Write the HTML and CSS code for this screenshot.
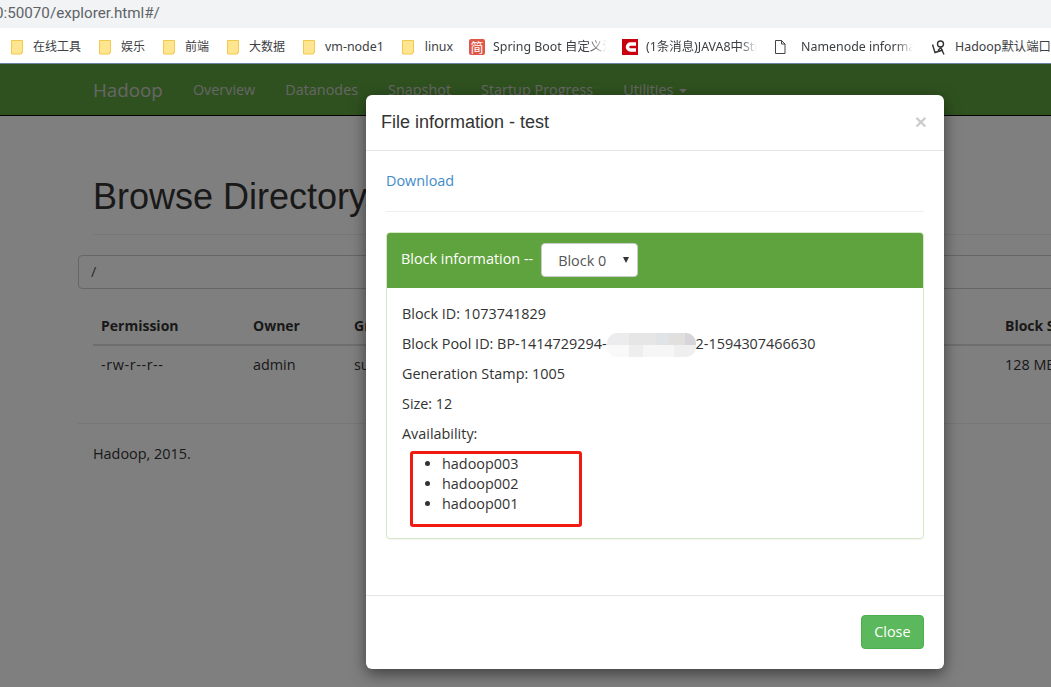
FILE: index.html
```html
<!DOCTYPE html>
<html lang="en">
<head>
	<meta charset="utf-8">
	<title>Browsing HDFS</title>
	<link rel="stylesheet" href="styles.css">
</head>
<body>
<div class="urlbar"><span class="url">0:50070/explorer.html#/</span></div>
<div class="bookmarks">
	<a class="mark"><svg class="ico" viewBox="0 0 16 16"><path class="folder" d="M3.500 1.500h11v12h-1v1.500h-10z"/></svg><span>在线工具</span></a>
	<a class="mark"><svg class="ico" viewBox="0 0 16 16"><path class="folder" d="M3.500 1.500h11v12h-1v1.500h-10z"/></svg><span>娱乐</span></a>
	<a class="mark"><svg class="ico" viewBox="0 0 16 16"><path class="folder" d="M3.500 1.500h11v12h-1v1.500h-10z"/></svg><span>前端</span></a>
	<a class="mark"><svg class="ico" viewBox="0 0 16 16"><path class="folder" d="M3.500 1.500h11v12h-1v1.500h-10z"/></svg><span>大数据</span></a>
	<a class="mark"><svg class="ico" viewBox="0 0 16 16"><path class="folder" d="M3.500 1.500h11v12h-1v1.500h-10z"/></svg><span class="lat">vm-node1</span></a>
	<a class="mark"><svg class="ico" viewBox="0 0 16 16"><path class="folder" d="M3.500 1.500h11v12h-1v1.500h-10z"/></svg><span class="lat w-linux">linux</span></a>
	<a class="mark"><span class="ico jian">简</span><span class="lat fade w-spring">Spring Boot 自定义注解</span></a>
	<a class="mark"><svg class="ico csdn" viewBox="0 0 16 16"><rect width="16" height="16" fill="#c9000f"/><path d="M14 5H8.500a3 3 0 0 0 0 6H14" fill="none" stroke="#fff" stroke-width="3.500"/></svg><span class="lat fade w-java">(1条消息)JAVA8中Stream</span></a>
	<a class="mark"><svg class="ico doc" viewBox="0 0 16 16"><path class="page" d="M3.500 1.500h6l3.500 3.500v9.500h-9.500z M9.500 1.500v3.500h3.500"/></svg><span class="lat fade w-name">Namenode information</span></a>
	<a class="mark"><svg class="ico ele" viewBox="0 0 16 16"><g class="elephant"><circle cx="9.500" cy="5" r="3"/><path d="M1.500 5.500l2.500 8 8-2.500M9.500 8l3.500 7.500M10 8.500l-3 3"/></g></svg><span class="lat">Hadoop默认端口号</span></a>
</div>

<div class="viewport">
	<nav class="navbar">
		<div class="nav-inner">
			<a class="brand">Hadoop</a>
			<a class="nav-link">Overview</a>
			<a class="nav-link">Datanodes</a>
			<a class="nav-link">Snapshot</a>
			<a class="nav-link">Startup Progress</a>
			<a class="nav-link">Utilities <i class="caret"></i></a>
		</div>
	</nav>

	<div class="container">
		<div class="page-header"><h1>Browse Directory</h1></div>
		<div class="path">/</div>
		<table class="files">
			<thead>
				<tr><th class="c1">Permission</th><th class="c2">Owner</th><th class="c3">Group</th><th class="c4"></th><th>Block Size</th></tr>
			</thead>
			<tbody>
				<tr><td class="perm">-rw-r--r--</td><td>admin</td><td>supergroup</td><td></td><td>128 MB</td></tr>
			</tbody>
		</table>
		<hr class="foot-rule">
		<p class="foot">Hadoop, 2015.</p>
	</div>

	<div class="backdrop"></div>

	<div class="modal">
		<div class="modal-header">
			<h4>File information - test</h4>
			<span class="close">&times;</span>
		</div>
		<div class="modal-body">
			<a class="download">Download</a>
			<hr>
			<div class="panel">
				<div class="panel-heading">
					<span class="panel-title">Block information --</span>
					<span class="select">Block 0<i class="arrow"></i></span>
				</div>
				<div class="panel-body">
					<p>Block ID: 1073741829</p>
					<p>Block Pool ID: BP-1414729294-<span class="smudge"></span>2-1594307466630</p>
					<p>Generation Stamp: 1005</p>
					<p>Size: 12</p>
					<p>Availability:</p>
					<ul>
						<li>hadoop003</li>
						<li>hadoop002</li>
						<li>hadoop001</li>
					</ul>
					<div class="redbox"></div>
				</div>
			</div>
		</div>
		<div class="modal-footer"><button type="button">Close</button></div>
	</div>
</div>
</body>
</html>
```

FILE: styles.css
```css
html, body{
	margin: 0;
	height: 687px;
	overflow: hidden;
	background: #fff;
}
body{
	font: 14.400px/20px "Open Sans", "Noto Sans CJK SC", sans-serif;
	color: #333;
}
.urlbar{
	height: 28px;
	background: #f1f3f4;
	overflow: hidden;
}
.url{
	display: block;
	margin-left: -5px;
	font: 15.200px/27px Roboto, sans-serif;
	color: #5f6368;
}
.bookmarks{
	height: 35px;
	box-sizing: content-box;
	padding-left: 8px;
	display: flex;
	align-items: center;
	white-space: nowrap;
	overflow: hidden;
	font: 12px/18px "Noto Sans", "Noto Sans CJK SC", sans-serif;
	color: #3c4043;
	border-bottom: 1px solid #6c83a8;
}
.mark{
	display: flex;
	align-items: center;
	margin-right: 15px;
	padding-top: 2px;
}
.lat{
	font-size: 12.400px;
}
.w-linux{ margin-left: 1px; }
.ico{
	width: 16px;
	height: 16px;
	margin-right: 9px;
	flex: none;
}
.folder{
	fill: #fde68f;
	stroke: #f2c94c;
}
.page{
	fill: #fff;
	stroke: #444;
}
.elephant{
	fill: none;
	stroke: #333;
	stroke-width: 1.400;
}
.jian{
	margin-left: 1px;
	margin-right: 8px;
	background: #e0574a;
	color: #fff;
	border-radius: 2px;
	font-size: 13px;
	line-height: 16px;
	text-align: center;
}
.csdn{ margin-right: 8px; }
.doc{ margin-right: 13px; }
.ele{ margin-left: 3px; margin-right: 8px; }
.fade{
	overflow: hidden;
	-webkit-mask-image: linear-gradient(to right, #000 85%, transparent);
	mask-image: linear-gradient(to right, #000 85%, transparent);
}
.w-spring{ width: 114px; }
.w-java{ width: 111px; }
.w-name{ width: 112px; }

.viewport{
	position: relative;
	height: 623px;
	overflow: hidden;
	background: #fff;
}
.navbar{
	height: 51px;
	background: #5fa33e;
	border-bottom: 1px solid #000;
	box-sizing: content-box;
}
.nav-inner{
	width: 1170px;
	margin-left: 78px;
	padding-left: 15px;
	display: flex;
	height: 51px;
	align-items: center;
	box-sizing: border-box;
	font-size: 14.400px;
}
.brand{
	font-size: 18.800px;
	color: #ccc;
	margin-right: 30px;
}
.nav-link{
	color: #ccc;
	margin-right: 30px;
}
.caret{
	display: inline-block;
	border-top: 4px solid #ccc;
	border-left: 4px solid transparent;
	border-right: 4px solid transparent;
	vertical-align: middle;
	margin-left: 2px;
}
.container{
	width: 1170px;
	margin-left: 78px;
	padding: 0 15px;
	box-sizing: border-box;
	height: 571px;
}
.page-header{
	width: 1140px;
	padding: 61px 0 17px;
	border-bottom: 1px solid #eee;
}
h1{
	margin: 0;
	font: 36px/40px "Liberation Sans", Arial, sans-serif;
	color: #333;
}
.path{
	margin: 20px 0 0 -15px;
	width: 1170px;
	height: 34px;
	box-sizing: border-box;
	border: 1px solid #ccc;
	border-radius: 4px;
	padding: 6px 12px;
	color: #555;
}
.files{
	width: 1140px;
	margin-top: 19px;
	border-collapse: collapse;
	table-layout: fixed;
}
.files th, .files td{
	padding: 8px;
	text-align: left;
	white-space: nowrap;
}
.files th{
	border-bottom: 2px solid #ddd;
	font-weight: 700;
	font-size: 14px;
}
.files td{
	padding-top: 9px;
}
.files .perm{
	letter-spacing: .6px;
}
.c1{ width: 136px; }
.c2{ width: 85px; }
.c3{ width: 120px; }
.c4{ width: 499px; }
hr{
	border: 0;
	border-top: 1px solid #eee;
	margin: 0;
}
.foot-rule{
	width: 1170px;
	margin: 40px 0 0 -15px;
}
.foot{
	margin: 20px 0 0;
}
.backdrop{
	position: absolute;
	inset: 0;
	background: rgba(0, 0, 0, .5);
}
.modal{
	position: absolute;
	left: 366px;
	top: 31px;
	width: 578px;
	height: 574px;
	background: #fff;
	border-radius: 6px;
	box-shadow: 0 5px 15px rgba(0, 0, 0, .5);
	display: flex;
	flex-direction: column;
}
.modal-header{
	height: 56px;
	box-sizing: border-box;
	padding: 0 15px;
	display: flex;
	align-items: center;
	justify-content: space-between;
	border-bottom: 1px solid #e5e5e5;
}
h4{
	margin: 0 0 1px;
	font: 18px/20px "Liberation Sans", Arial, sans-serif;
	color: #333;
}
.close{
	font: 700 21px/21px "Liberation Sans", Arial, sans-serif;
	color: #000;
	opacity: .2;
	margin: 0 2px 2px 0;
}
.modal-body{
	flex: 1;
	padding: 20px;
}
.download{
	color: #428bca;
	display: block;
}
.modal-body hr{
	margin: 20px 0;
}
.panel{
	border: 1px solid #d6e9c6;
	border-radius: 4px;
	box-shadow: 0 1px 1px rgba(0, 0, 0, .05);
}
.panel-heading{
	height: 55px;
	box-sizing: border-box;
	padding: 0 14px;
	display: flex;
	align-items: center;
	background: #5fa33e;
	color: #fff;
	border-radius: 3px 3px 0 0;
}
.panel-title{
	margin-bottom: 3px;
}
.select{
	position: relative;
	width: 97px;
	height: 34px;
	box-sizing: border-box;
	margin: 0 0 1px 8px;
	padding: 7px 16px;
	background: #fff;
	border: 1px solid #ccc;
	border-radius: 4px;
	color: #555;
}
.arrow{
	position: absolute;
	right: 8px;
	top: 13px;
	border-top: 6px solid #333;
	border-left: 3px solid transparent;
	border-right: 3px solid transparent;
}
.panel-body{
	position: relative;
	padding: 16px 15px 15px;
}
.panel-body p{
	margin: 0 0 10px;
}
.panel-body ul{
	margin: 0 0 9px;
	padding-left: 40px;
}
.smudge{
	display: inline-block;
	width: 89px;
	height: 24px;
	margin: -4px 0;
	vertical-align: middle;
	border-radius: 10px;
	background:
		linear-gradient(to right, #ececee 25%, #e6e6e6 25% 55%, #e0e4e6 55% 70%, #e2e0df 70% 88%, #d6d6da 88%) top / 100% 50% no-repeat,
		linear-gradient(to right, #f9f9f9 25%, #eeeeee 25% 40%, #f6f6f6 40% 75%, #efefef 75%) bottom / 100% 50% no-repeat;
}
.redbox{
	position: absolute;
	left: 23px;
	top: 163px;
	width: 172px;
	height: 76px;
	box-sizing: border-box;
	border: 3px solid #f01a10;
	border-radius: 3px;
}
.modal-footer{
	height: 74px;
	box-sizing: border-box;
	padding: 0 20px 2px 0;
	display: flex;
	align-items: center;
	justify-content: flex-end;
	border-top: 1px solid #e5e5e5;
}
button{
	font: inherit;
	color: #fff;
	background: #5cb85c;
	border: 1px solid #4cae4c;
	border-radius: 4px;
	padding: 6px 12.500px;
}
```
